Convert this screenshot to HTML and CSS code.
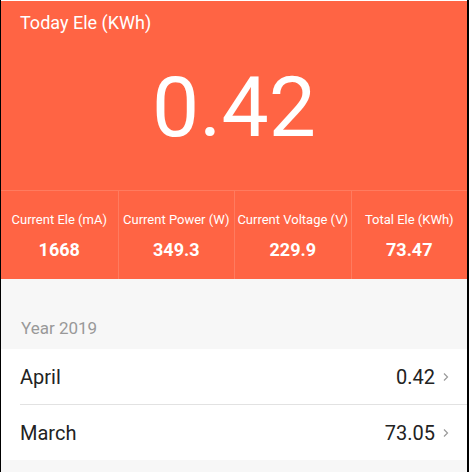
FILE: index.html
```html
<!DOCTYPE html>
<html lang="en">
    <head>
        <meta charset="UTF-8">
        <meta name="viewport" content="width=device-width, initial-scale=1.0">
        <title>Electricity</title>
        <link rel="stylesheet" href="styles.css">
    </head>
    <body>
        <div class="screen">
            <div class="hero">
                <div class="hero-title">Today Ele (KWh)</div>
                <div class="hero-value">0.42</div>
            </div>
            <div class="stats">
                <div class="stat">
                    <span class="stat-label">Current Ele (mA)</span>
                    <b class="stat-value">1668</b>
                </div>
                <div class="stat">
                    <span class="stat-label">Current Power (W)</span>
                    <b class="stat-value">349.3</b>
                </div>
                <div class="stat">
                    <span class="stat-label">Current Voltage (V)</span>
                    <b class="stat-value">229.9</b>
                </div>
                <div class="stat">
                    <span class="stat-label">Total Ele (KWh)</span>
                    <b class="stat-value">73.47</b>
                </div>
            </div>
            <div class="section-title">Year 2019</div>
            <div class="list">
                <div class="row">
                    <span class="month">April</span>
                    <span class="amount">0.42</span>
                    <svg class="chevron" width="6" height="10" viewBox="0 0 6 10"><path d="M1 1.5 L4.5 5 L1 8.5" fill="none" stroke="#9a9a9a" stroke-width="1.2"/></svg>
                </div>
                <div class="row">
                    <span class="month">March</span>
                    <span class="amount">73.05</span>
                    <svg class="chevron" width="6" height="10" viewBox="0 0 6 10"><path d="M1 1.5 L4.5 5 L1 8.5" fill="none" stroke="#9a9a9a" stroke-width="1.2"/></svg>
                </div>
            </div>
        </div>
    </body>
</html>
```

FILE: styles.css
```css
:root {
    --orange: #ff6444;
    --font: Roboto, "Noto Sans", sans-serif;
}
body {
    background-color: black;
    margin: 0;
    overflow: hidden;
    font-family: var(--font);
}
.screen {
    margin-left: 1px;
    width: 466px;
    height: 472px;
    border-top: 1px solid white;
    background-color: #f7f7f7;
}
.hero {
    background-color: var(--orange);
    color: white;
    height: 189px;
}
.hero-title {
    padding: 12px 0 0 19px;
    font-size: 18px;
    line-height: 20px;
}
.hero-value {
    text-align: center;
    font-size: 84px;
    line-height: 1;
    margin-top: 33px;
}
.stats {
    display: grid;
    grid-template-columns: repeat(4, 1fr);
    height: 88px;
    background-color: var(--orange);
    border-top: 1px solid rgba(255, 255, 255, 0.15);
    color: white;
}
.stat {
    display: flex;
    flex-direction: column;
    align-items: center;
    padding-top: 20px;
    border-left: 1px solid rgba(255, 255, 255, 0.15);
}
.stat:first-child {
    border-left: none;
}
.stat-label {
    font-size: 13px;
    line-height: 18px;
    white-space: nowrap;
}
.stat-value {
    font-size: 18px;
    line-height: 22px;
    margin-top: 10px;
}
.section-title {
    color: #999999;
    font-size: 17px;
    padding: 39px 0 0 20px;
    height: 31px;
}
.list {
    background-color: white;
}
.row {
    display: flex;
    align-items: center;
    height: 55px;
    margin-left: 19px;
    padding-right: 18px;
    color: #222222;
    font-size: 20px;
}
.row + .row {
    border-top: 1px solid #e2e2e2;
}
.month {
    flex: 1;
}
.chevron {
    margin-left: 8px;
}
```
